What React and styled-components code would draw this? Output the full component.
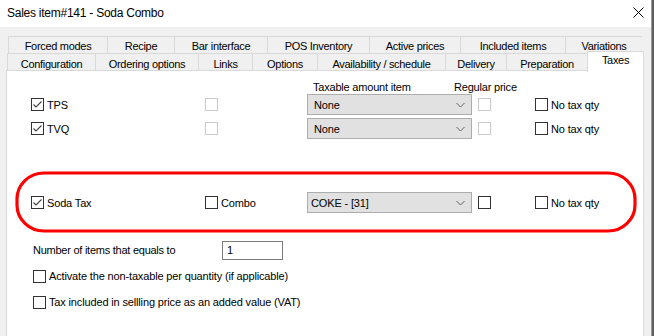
import React from 'react';
import styled, { createGlobalStyle } from 'styled-components';

const GlobalStyle = createGlobalStyle`
  html, body {
    margin: 0;
    padding: 0;
    background: #f0f0f0;
  }
  body {
    font-family: "Liberation Sans", Arial, sans-serif;
    font-size: 11px;
    color: #000;
  }
`;

const Screen = styled.div`
  display: flex;
  width: 654px;
  height: 336px;
  overflow: hidden;
`;

const Window = styled.div`
  display: flex;
  flex-direction: column;
  width: 651px;
  height: 100%;
`;

const Backdrop = styled.div`
  flex: 1;
  background: #5f5f5f;
  border-left: 1px solid #9a9a9a;
`;

const TitleBar = styled.div`
  display: flex;
  align-items: center;
  justify-content: space-between;
  height: 27px;
  padding: 0 7px 2px 7px;
  box-sizing: border-box;
  background: #fff;
  font-size: 12px;
  letter-spacing: -0.25px;
`;

const CloseButton = styled.svg`
  width: 11px;
  height: 11px;
`;

const Body = styled.div`
  flex: 1;
  display: flex;
  flex-direction: column;
  padding: 9px 7px 0 6px;
  background: #f0f0f0;
  min-height: 0;
`;

const TabRow = styled.div`
  display: grid;
  grid-template-columns: ${({ $cols }) => $cols};
  height: 17px;
  margin: 0 ${({ $inset }) => $inset}px;
  border-right: 1px solid #d9d9d9;
  box-sizing: border-box;
`;

const Tab = styled.div`
  display: flex;
  align-items: center;
  justify-content: center;
  border-top: 1px solid #d9d9d9;
  border-left: 1px solid #d9d9d9;
  background: ${({ $active }) => ($active ? '#fff' : '#f0f0f0')};
  font-size: 11px;
  letter-spacing: -0.3px;
  white-space: nowrap;
  padding-top: 1px;
  box-sizing: border-box;
  ${({ $active }) =>
    $active &&
    `
    position: relative;
    z-index: 1;
    margin-top: -2px;
    margin-right: -1px;
    height: 21px;
    border-right: 1px solid #d9d9d9;
    align-items: flex-start;
    padding-top: 2px;
  `}
`;

const Panel = styled.div`
  position: relative;
  flex: 1;
  display: flex;
  flex-direction: column;
  background: #fff;
  border: 1px solid #d9d9d9;
  border-bottom: none;
  padding: 9px 0 0 24px;
`;

const TaxGrid = styled.div`
  display: grid;
  grid-template-columns: 174px 102px 171px 57px auto;
  grid-auto-rows: 21px;
  row-gap: 3px;
  align-items: center;
  margin-top: ${({ $top }) => $top || 0}px;
`;

const HeaderRow = styled.div`
  display: grid;
  grid-template-columns: 279px 144px auto;
  height: 14px;
  align-items: center;
  letter-spacing: -0.2px;
`;

const HeaderLabel = styled.span`
  grid-column: ${({ $col }) => $col};
  padding-left: ${({ $pad }) => $pad || 0}px;
`;

const CheckField = styled.label`
  display: flex;
  align-items: center;
  gap: 3px;
  letter-spacing: -0.15px;
  white-space: nowrap;
`;

const Box = styled.span`
  display: inline-flex;
  align-items: center;
  justify-content: center;
  width: 13px;
  height: 13px;
  box-sizing: border-box;
  border: 1px solid ${({ $disabled }) => ($disabled ? '#cccccc' : '#333333')};
  background: #fff;
  flex-shrink: 0;
`;

const Select = styled.div`
  display: flex;
  align-items: center;
  justify-content: space-between;
  width: 165px;
  height: 21px;
  box-sizing: border-box;
  border: 1px solid #adadad;
  background: #e1e1e1;
  padding: 0 6px 0 ${({ $pad }) => $pad}px;
  letter-spacing: -0.15px;
`;

const Chevron = styled.svg`
  width: 9px;
  height: 6px;
`;

const Extras = styled.div`
  display: flex;
  flex-direction: column;
  margin-top: 24px;
  padding-left: 2px;
`;

const ExtraRow = styled.div`
  display: flex;
  align-items: center;
  height: 26px;
  letter-spacing: -0.15px;
`;

const NumberLabel = styled.span`
  width: 189px;
  letter-spacing: -0.25px;
`;

const NumberInput = styled.div`
  display: flex;
  align-items: center;
  width: 61px;
  height: 19px;
  box-sizing: border-box;
  border: 1px solid #7a7a7a;
  padding-left: 4px;
  background: #fff;
`;

const Highlight = styled.svg`
  position: absolute;
  left: 8px;
  top: 100px;
  width: 622px;
  height: 62px;
  pointer-events: none;
`;

const CheckBox = ({ checked, disabled }) => (
  <Box $disabled={disabled}>
    {checked && (
      <svg width="11" height="11" viewBox="0 0 11 11">
        <polyline points="1.5,5.5 4,8 9.5,2.5" fill="none" stroke="#444" strokeWidth="1.1" />
      </svg>
    )}
  </Box>
);

const Dropdown = ({ value, pad = 6 }) => (
  <Select $pad={pad}>
    <span>{value}</span>
    <Chevron viewBox="0 0 9 6">
      <polyline points="0.5,1 4.5,5 8.5,1" fill="none" stroke="#606060" strokeWidth="1" />
    </Chevron>
  </Select>
);

const row1 = [
  ['Forced modes', 99],
  ['Recipe', 67],
  ['Bar interface', 93],
  ['POS Inventory', 102],
  ['Active prices', 91],
  ['Included items', 105],
  ['Variations', 77],
];

const row2 = [
  ['Configuration', 88],
  ['Ordering options', 103],
  ['Links', 54],
  ['Options', 65],
  ['Availability / schedule', 128],
  ['Delivery', 61],
  ['Preparation', 81],
  ['Taxes', 56],
];

const TaxLine = ({ name, combo, value, valuePad, regularEnabled }) => (
  <>
    <CheckField>
      <CheckBox checked />
      {name}
    </CheckField>
    <CheckField>
      <CheckBox disabled={!combo} />
      {combo && 'Combo'}
    </CheckField>
    <Dropdown value={value} pad={valuePad} />
    <CheckField>
      <CheckBox disabled={!regularEnabled} />
    </CheckField>
    <CheckField>
      <CheckBox />
      No tax qty
    </CheckField>
  </>
);

export default function App() {
  return (
    <Screen>
      <GlobalStyle />
      <Window>
        <TitleBar>
          <span>Sales item#141 - Soda Combo</span>
          <CloseButton viewBox="0 0 11 11">
            <path d="M0.5 0.5 L10.5 10.5 M10.5 0.5 L0.5 10.5" stroke="#000" strokeWidth="1" />
          </CloseButton>
        </TitleBar>
        <Body>
          <TabRow $inset={2} $cols={row1.map(([, w]) => `${w}px`).join(' ')}>
            {row1.map(([label]) => (
              <Tab key={label}>{label}</Tab>
            ))}
          </TabRow>
          <TabRow $inset={1} $cols={row2.map(([, w]) => `${w}px`).join(' ')}>
            {row2.map(([label]) => (
              <Tab key={label} $active={label === 'Taxes'}>
                {label}
              </Tab>
            ))}
          </TabRow>
          <Panel>
            <HeaderRow>
              <HeaderLabel $col={2} $pad={3}>Taxable amount item</HeaderLabel>
              <HeaderLabel $col={3}>Regular price</HeaderLabel>
            </HeaderRow>
            <TaxGrid>
              <TaxLine name="TPS" value="None" />
              <TaxLine name="TVQ" value="None" />
            </TaxGrid>
            <TaxGrid $top={53}>
              <TaxLine name="Soda Tax" combo value="COKE - [31]" valuePad={3} regularEnabled />
            </TaxGrid>
            <Extras>
              <ExtraRow>
                <NumberLabel>Number of items that equals to</NumberLabel>
                <NumberInput>1</NumberInput>
              </ExtraRow>
              <ExtraRow>
                <CheckField>
                  <CheckBox />
                  Activate the non-taxable per quantity (if applicable)
                </CheckField>
              </ExtraRow>
              <ExtraRow>
                <CheckField>
                  <CheckBox />
                  Tax included in sellling price as an added value (VAT)
                </CheckField>
              </ExtraRow>
            </Extras>
            <Highlight viewBox="0 0 622 62">
              <rect x="2" y="2" width="618" height="58" rx="27" ry="26" fill="none" stroke="#ff0000" strokeWidth="3.2" />
            </Highlight>
          </Panel>
        </Body>
      </Window>
      <Backdrop />
    </Screen>
  );
}
